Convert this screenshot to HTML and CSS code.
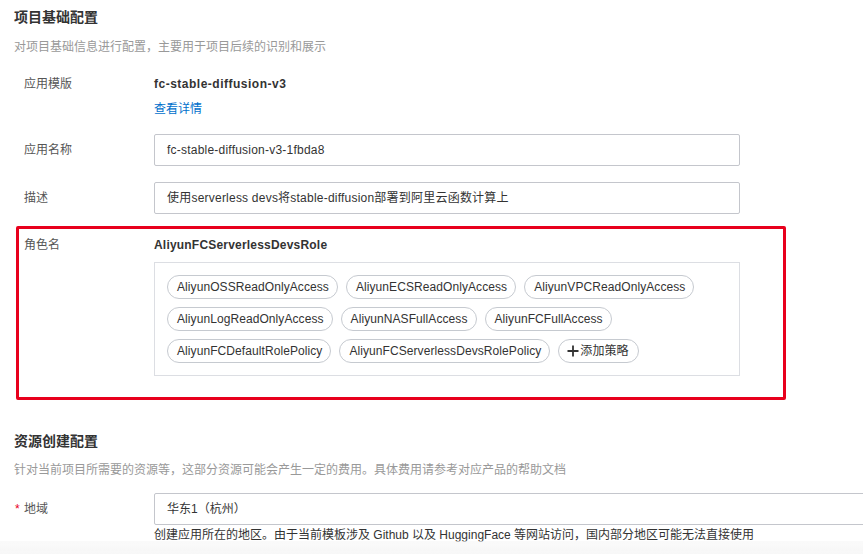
FILE: index.html
```html
<!DOCTYPE html>
<html lang="zh-CN">
<head>
<meta charset="utf-8">
<title>项目基础配置</title>
<link rel="stylesheet" href="styles.css">
</head>
<body>
<div class="page">
  <section class="section">
    <h2 class="sec-title">项目基础配置</h2>
    <p class="sec-desc">对项目基础信息进行配置，主要用于项目后续的识别和展示</p>

    <div class="row row-template">
      <div class="label">应用模版</div>
      <div class="content">
        <div class="value-bold value-template">fc-stable-diffusion-v3</div>
        <a class="link" href="#">查看详情</a>
      </div>
    </div>

    <div class="row row-input row-name">
      <div class="label">应用名称</div>
      <div class="content">
        <div class="input">fc-stable-diffusion-v3-1fbda8</div>
      </div>
    </div>

    <div class="row row-input row-desc">
      <div class="label">描述</div>
      <div class="content">
        <div class="input">使用serverless devs将stable-diffusion部署到阿里云函数计算上</div>
      </div>
    </div>

    <div class="row row-role">
      <div class="label">角色名</div>
      <div class="content">
        <div class="value-bold">AliyunFCServerlessDevsRole</div>
        <div class="tag-box">
          <span class="tag">AliyunOSSReadOnlyAccess</span>
          <span class="tag">AliyunECSReadOnlyAccess</span>
          <span class="tag">AliyunVPCReadOnlyAccess</span>
          <span class="tag">AliyunLogReadOnlyAccess</span>
          <span class="tag">AliyunNASFullAccess</span>
          <span class="tag">AliyunFCFullAccess</span>
          <span class="tag">AliyunFCDefaultRolePolicy</span>
          <span class="tag">AliyunFCServerlessDevsRolePolicy</span>
          <span class="tag tag-add"><svg class="plus" width="12" height="12" viewBox="0 0 12 12"><path d="M6 0.5V11.5M0.5 6H11.5" stroke="#333" stroke-width="1.8" fill="none"/></svg>添加策略</span>
        </div>
      </div>
    </div>
  </section>

  <section class="section section-2">
    <h2 class="sec-title">资源创建配置</h2>
    <p class="sec-desc">针对当前项目所需要的资源等，这部分资源可能会产生一定的费用。具体费用请参考对应产品的帮助文档</p>

    <div class="row row-input row-region">
      <div class="label label-req"><span class="req">*</span>地域</div>
      <div class="content">
        <div class="input input-wide">华东1（杭州）</div>
        <div class="help">创建应用所在的地区。由于当前模板涉及 Github 以及 HuggingFace 等网站访问，国内部分地区可能无法直接使用</div>
      </div>
    </div>
  </section>
</div>
<div class="bottom-fade"></div>
</body>
</html>
```

FILE: styles.css
```css
* { box-sizing: border-box; }
html, body {
  margin: 0;
  padding: 0;
  background: #fff;
  overflow: hidden;
}
body {
  font-family: "Liberation Sans", "Noto Sans CJK SC", sans-serif;
  font-size: 12px;
  color: #333;
  width: 863px;
  height: 554px;
}
.page {
  padding: 7px 0 0 0;
}
.sec-title {
  margin: 0 0 0 14px;
  font-size: 14px;
  line-height: 20px;
  font-weight: bold;
  color: #333;
}
.sec-desc {
  margin: 11px 0 0 14px;
  font-size: 12px;
  line-height: 18px;
  color: #999;
}
.row {
  display: flex;
  padding-left: 24px;
}
.label {
  width: 130px;
  flex: none;
  line-height: 18px;
  color: #555;
}
.content {
  flex: none;
  width: 586px;
}
.row-template {
  margin-top: 19px;
}
.value-bold {
  font-weight: bold;
  line-height: 18px;
  color: #333;
  letter-spacing: 0.2px;
}
.value-template {
  letter-spacing: 0.5px;
}
.link {
  display: block;
  margin-top: 7px;
  line-height: 18px;
  color: #0070cc;
  text-decoration: none;
}
.row-input .label {
  line-height: 32px;
}
.row-name {
  margin-top: 16px;
}
.row-desc {
  margin-top: 16px;
}
.input {
  height: 32px;
  border: 1px solid #c4c6cc;
  border-radius: 2px;
  padding: 0 12px;
  line-height: 30px;
  color: #333;
  white-space: nowrap;
  overflow: hidden;
  letter-spacing: 0.22px;
}
.row-role {
  margin: 12px 0 0 16px;
  width: 770px;
  height: 174px;
  border: 3px solid #e8001c;
  border-radius: 2px;
  padding: 7px 0 0 5px;
}
.tag-box {
  margin-top: 8px;
  border: 1px solid #dcdee3;
  padding: 12px;
  display: flex;
  flex-wrap: wrap;
  gap: 8px 8px;
}
.tag {
  display: inline-flex;
  align-items: center;
  height: 24px;
  padding: 0 8px 0 9px;
  border: 1px solid #c6cad0;
  border-radius: 12px;
  color: #333;
  line-height: 22px;
  white-space: nowrap;
  letter-spacing: 0.08px;
}
.tag-add {
  padding: 0 9px 0 8px;
}
.plus {
  margin-right: 1px;
}
.section-2 {
  margin-top: 31px;
}
.section-2 .sec-desc {
  margin-top: 10px;
}
.row-region {
  margin-top: 14px;
  padding-left: 15px;
}
.label-req {
  width: 139px;
}
.req {
  color: #e8001c;
  display: inline-block;
  width: 9px;
}
.row-region .content {
  width: 720px;
}
.input-wide {
  border-radius: 2px 0 0 2px;
  letter-spacing: 0;
}
.help {
  margin-top: 1px;
  line-height: 18px;
  color: #333;
  white-space: nowrap;
}
.bottom-fade {
  position: fixed;
  left: 0;
  right: 0;
  bottom: 0;
  height: 13px;
  background: linear-gradient(to bottom, rgba(247,247,247,0.6), #f7f7f7);
}
```
